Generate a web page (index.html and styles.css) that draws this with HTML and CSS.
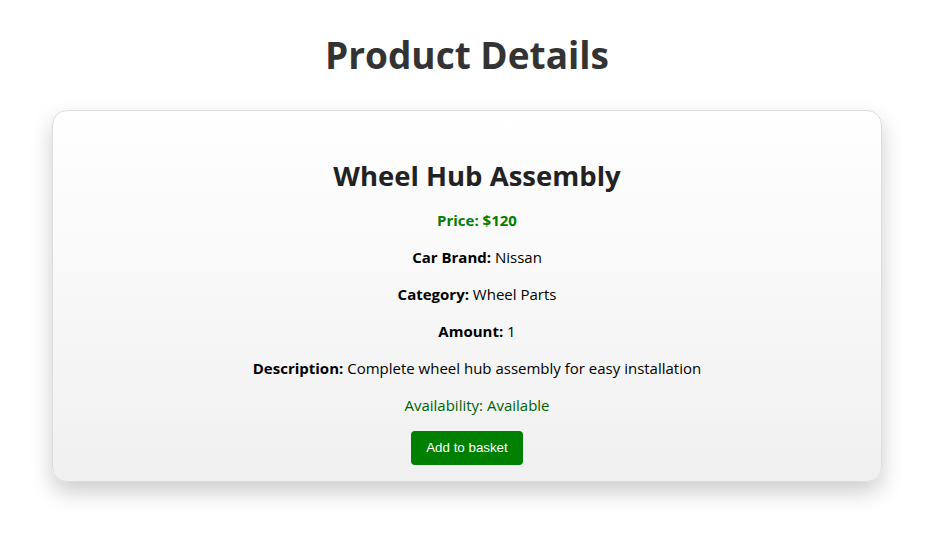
FILE: index.html
```html
<!DOCTYPE html>
<html lang="en">
<head>
<meta charset="utf-8">
<title>Product Details</title>
<link rel="stylesheet" href="styles.css">
</head>
<body>
<main class="page">
  <h1 class="page-title">Product Details</h1>
  <section class="card">
    <div class="details">
      <h2 class="product-name">Wheel Hub Assembly</h2>
      <p class="price">Price: $120</p>
      <p class="row"><strong>Car Brand:</strong> Nissan</p>
      <p class="row"><strong>Category:</strong> Wheel Parts</p>
      <p class="row"><strong>Amount:</strong> 1</p>
      <p class="row"><strong>Description:</strong> Complete wheel hub assembly for easy installation</p>
      <p class="availability">Availability: Available</p>
    </div>
    <button class="basket-btn" type="button">Add to basket</button>
  </section>
</main>
</body>
</html>
```

FILE: styles.css
```css
* { box-sizing: border-box; }
html, body { margin: 0; padding: 0; background: #fff; }
html, body { min-height: 100%; }
body {
  font-family: "Open Sans", "Noto Sans", sans-serif;
  color: #000;
}
.page {
  display: flex;
  flex-direction: column;
  align-items: center;
  min-height: 551px;
  padding: 28px 0 50px 3px;
}
.page-title {
  margin: 0 0 28px;
  font-size: 37px;
  line-height: 54px;
  font-weight: 700;
  color: #333;
}
.card {
  width: 830px;
  border: 1px solid #ddd;
  border-radius: 15px;
  background: linear-gradient(to bottom, #ffffff, #f0f0f0);
  box-shadow: 0 10px 22px rgba(0, 0, 0, 0.2);
  padding: 16px 20px 16px;
  text-align: center;
}
.details {
  padding-left: 20px;
}
.product-name {
  margin: 30px 0 15px;
  font-size: 27.5px;
  line-height: 38px;
  font-weight: 700;
  color: #222;
}
.card p {
  margin: 16px 0;
  font-size: 15px;
  line-height: 21px;
}
.card p.price {
  margin-top: 0;
  color: #008000;
  font-weight: 700;
}
.card p.availability {
  margin-bottom: 15px;
  color: #006400;
}
.basket-btn {
  font-family: "Liberation Sans", Arial, sans-serif;
  font-size: 13.33px;
  background: #008000;
  color: #fff;
  border: none;
  border-radius: 4px;
  padding: 10px 15px;
  line-height: 14px;
  cursor: pointer;
}
```
